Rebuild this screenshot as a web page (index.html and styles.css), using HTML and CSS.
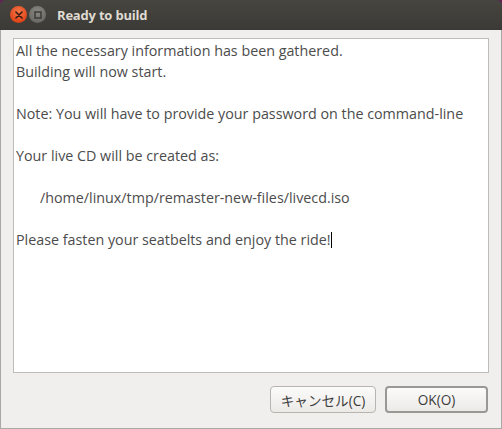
FILE: index.html
```html
<!DOCTYPE html>
<html>
<head>
<meta charset="utf-8">
<link rel="stylesheet" href="styles.css">
</head>
<body>
<div class="window">
  <div class="titlebar">
    <div class="wbtns">
      <span class="wbtn close"><svg width="8" height="8" viewBox="0 0 8 8"><path d="M1 1 L7 7 M7 1 L1 7" stroke="#3a1a10" stroke-width="1.6" stroke-linecap="round"/></svg></span>
      <span class="wbtn mini"><svg width="8" height="8" viewBox="0 0 8 8"><rect x="1" y="1" width="6" height="6" fill="none" stroke="#3c3b37" stroke-width="1.5"/></svg></span>
    </div>
    <div class="title">Ready to build</div>
  </div>
  <div class="body">
    <div class="textview">
      <div class="line">All the necessary information has been gathered.</div>
      <div class="line">Building will now start.</div>
      <div class="line">&nbsp;</div>
      <div class="line">Note: You will have to provide your password on the command-line</div>
      <div class="line">&nbsp;</div>
      <div class="line">Your live CD will be created as:</div>
      <div class="line">&nbsp;</div>
      <div class="line indent">/home/linux/tmp/remaster-new-files/livecd.iso</div>
      <div class="line">&nbsp;</div>
      <div class="line">Please fasten your seatbelts and enjoy the ride!<span class="caret"></span></div>
    </div>
    <div class="actions">
      <button class="btn cancel">キャンセル(C)</button>
      <button class="btn ok">OK(O)</button>
    </div>
  </div>
</div>
</body>
</html>
```

FILE: styles.css
```css
html, body {
  margin: 0;
  padding: 0;
  background: #5e2750;
}
body {
  width: 502px;
  height: 429px;
  overflow: hidden;
  font-family: "Open Sans", "Noto Sans CJK JP", sans-serif;
}
.window {
  width: 502px;
  height: 429px;
  display: flex;
  flex-direction: column;
  border-radius: 6px 6px 0 0;
  overflow: hidden;
}
.titlebar {
  height: 30px;
  flex: none;
  background: linear-gradient(#46453f, #3b3a36);
  display: flex;
  align-items: center;
  padding-left: 10px;
}
.wbtns {
  display: flex;
  gap: 2px;
  margin-top: -1px;
}
.wbtn {
  width: 17px;
  height: 17px;
  border-radius: 50%;
  display: flex;
  align-items: center;
  justify-content: center;
}
.close {
  background: radial-gradient(circle at 50% 35%, #f4784a, #e0461a 70%, #b8360f);
}
.mini {
  background: radial-gradient(circle at 50% 35%, #8a8983, #6c6b66 70%, #55544f);
}
.title {
  margin-left: 11px;
  color: #dfdbd2;
  font-weight: bold;
  font-size: 13px;
  letter-spacing: -0.2px;
}
.body {
  flex: 1;
  background: #f0efed;
  border: 1px solid #a9a8a4;
  border-top: none;
  display: flex;
  flex-direction: column;
  padding: 8px 12px 14px 12px;
}
.textview {
  height: 335px;
  background: #fff;
  border: 1px solid #bfbcb7;
  padding: 1px 2px;
  color: #4c4c4c;
  font-size: 14.3px;
  line-height: 21px;
  box-sizing: border-box;
}
.line {
  white-space: pre;
}
.indent {
  padding-left: 24px;
}
.caret {
  display: inline-block;
  width: 1px;
  height: 16px;
  background: #000;
  vertical-align: -3px;
}
.actions {
  display: flex;
  justify-content: flex-end;
  gap: 9px;
  margin-top: 13px;
  padding-right: 1px;
}
.btn {
  height: 27px;
  border: 1px solid #b8b5b0;
  border-radius: 4px;
  background: linear-gradient(#fbfbfa, #eceae7);
  color: #3c3c3c;
  font-family: "Open Sans", "Noto Sans CJK JP", sans-serif;
  font-size: 13.6px;
  padding: 0;
}
.cancel {
  width: 106px;
}
.ok {
  width: 103px;
  border: 2px solid #9a9894;
}
```
